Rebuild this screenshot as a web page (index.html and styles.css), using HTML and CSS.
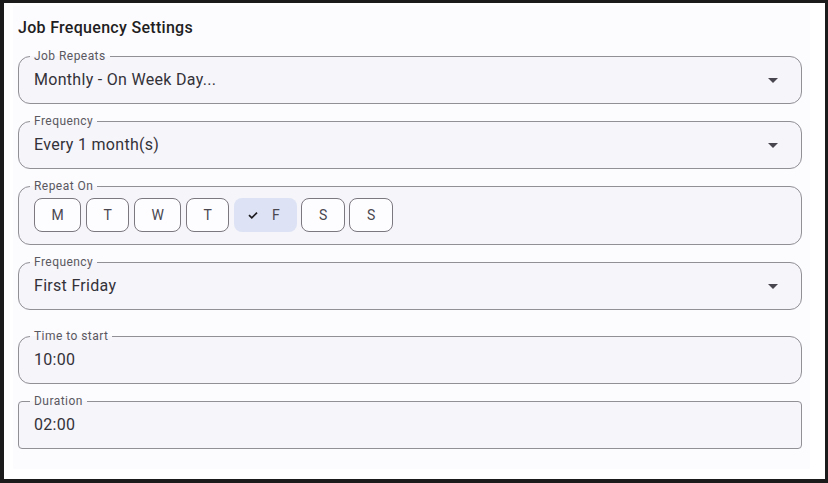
FILE: index.html
```html
<!DOCTYPE html>
<html lang="en">
<head>
<meta charset="utf-8">
<title>Job Frequency Settings</title>
<link rel="stylesheet" href="styles.css">
</head>
<body>
<div class="frame">
  <section class="panel">
    <h2 class="title">Job Frequency Settings</h2>

    <fieldset class="field">
      <legend>Job Repeats</legend>
      <div class="row">
        <span class="value">Monthly - On Week Day...</span>
        <svg class="arrow" viewBox="0 0 24 24" aria-hidden="true"><path d="M7 10l5 5 5-5z"/></svg>
      </div>
    </fieldset>

    <fieldset class="field">
      <legend>Frequency</legend>
      <div class="row">
        <span class="value">Every 1 month(s)</span>
        <svg class="arrow" viewBox="0 0 24 24" aria-hidden="true"><path d="M7 10l5 5 5-5z"/></svg>
      </div>
    </fieldset>

    <fieldset class="field days">
      <legend>Repeat On</legend>
      <div class="chips">
        <button class="chip" type="button">M</button>
        <button class="chip" type="button">T</button>
        <button class="chip" type="button">W</button>
        <button class="chip" type="button">T</button>
        <button class="chip selected" type="button"><svg class="check" viewBox="0 0 18 18" aria-hidden="true"><polyline points="5,9.2 7.8,11.9 13,6.6"/></svg>F</button>
        <button class="chip" type="button">S</button>
        <button class="chip" type="button">S</button>
      </div>
    </fieldset>

    <fieldset class="field">
      <legend>Frequency</legend>
      <div class="row">
        <span class="value">First Friday</span>
        <svg class="arrow" viewBox="0 0 24 24" aria-hidden="true"><path d="M7 10l5 5 5-5z"/></svg>
      </div>
    </fieldset>

    <fieldset class="field spaced">
      <legend>Time to start</legend>
      <div class="row">
        <span class="value">10:00</span>
      </div>
    </fieldset>

    <fieldset class="field square">
      <legend>Duration</legend>
      <div class="row">
        <span class="value">02:00</span>
      </div>
    </fieldset>
  </section>
</div>
</body>
</html>
```

FILE: styles.css
```css
* {
  box-sizing: border-box;
}

html, body {
  margin: 0;
  padding: 0;
  background: #1b1b1b;
}

body {
  font-family: Roboto, "Noto Sans", "Liberation Sans", sans-serif;
  color: #1d1b20;
}

.frame {
  width: 828px;
  height: 483px;
  border-style: solid;
  border-color: #1b1b1b;
  border-width: 3px 3px 4px 4px;
  background: #ffffff;
  padding: 3px 0 0 9px;
}

.panel {
  width: 797px;
  background: #fcfcff;
  padding: 10px 8px 20px 5px;
}

.title {
  margin: 0 0 10px;
  font-size: 16px;
  line-height: 24px;
  font-weight: 500;
  letter-spacing: 0.3px;
  color: #1f1e22;
}

.field {
  margin: 11px 0 0;
  padding: 5px 15px 11px;
  border: 1px solid #909095;
  border-radius: 12px;
  background: #f6f5fa;
  min-width: 0;
}

.title + .field {
  margin-top: 0;
}

.field legend {
  font-size: 12px;
  line-height: 13px;
  padding: 0 4px;
  margin-left: -4px;
  letter-spacing: 0.45px;
  color: #5a5860;
}

.field.spaced {
  margin-top: 20px;
}

.field.square {
  border-radius: 4px;
}

.row {
  display: flex;
  align-items: center;
  height: 24px;
}

.value {
  flex: 1;
  font-size: 16px;
  line-height: 24px;
  letter-spacing: 0.3px;
  color: #333238;
}

.arrow {
  width: 24px;
  height: 24px;
  margin-top: 0;
  margin-right: 1px;
  fill: #49454f;
  flex: none;
}

.field.days {
  padding: 5px 15px 12px;
}

.chips {
  display: flex;
  gap: 4.67px;
}

.chip {
  display: flex;
  align-items: center;
  height: 34px;
  padding: 0 16.5px;
  border: 1px solid #7c7880;
  border-radius: 8px;
  background: #fdfcff;
  font-family: Roboto, "Noto Sans", "Liberation Sans", sans-serif;
  font-size: 14px;
  font-weight: 400;
  color: #4a4750;
  line-height: 20px;
}

.chip.selected {
  border-color: transparent;
  background: #dde3f4;
  padding: 0 16px 0 9px;
}

.check {
  width: 18px;
  height: 18px;
  margin-right: 10px;
  fill: none;
  stroke: #1d1b20;
  stroke-width: 1.7;
}
```
